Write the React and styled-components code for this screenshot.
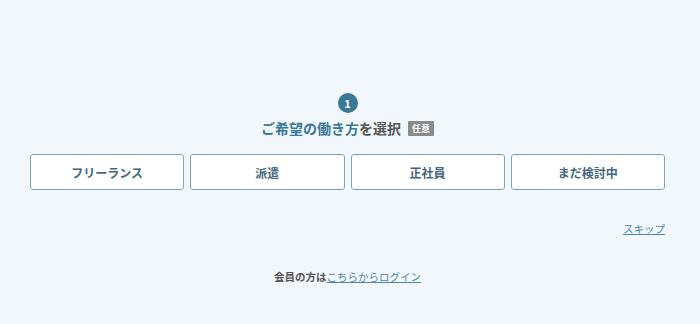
import styled, { createGlobalStyle } from "styled-components";

const GlobalStyle = createGlobalStyle`
    html, body {
        margin: 0;
        padding: 0;
        background: #f2f7fb;
    }
    body {
        font-family: "Noto Sans CJK JP", "Noto Sans", sans-serif;
    }
`;

const options = ["フリーランス", "派遣", "正社員", "まだ検討中"];

const App = () => {
    return (
        <>
            <GlobalStyle />
            <Page>
                <Step>1</Step>
                <Title>
                    <Accent>ご希望の働き方</Accent>を選択
                    <Badge>任意</Badge>
                </Title>
                <Options>
                    {options.map((label) => (
                        <Option key={label} type="button">
                            {label}
                        </Option>
                    ))}
                </Options>
                <SkipRow>
                    <SkipLink href="#">スキップ</SkipLink>
                </SkipRow>
                <Login>
                    会員の方は<LoginLink href="#">こちらからログイン</LoginLink>
                </Login>
            </Page>
        </>
    );
};

const Page = styled.div`
    width: 700px;
    height: 324px;
    box-sizing: border-box;
    padding: 93px 35px 0 30px;
    display: flex;
    flex-direction: column;
    align-items: center;
`;

const Step = styled.div`
    width: 20px;
    height: 20px;
    border-radius: 50%;
    background: #3b7898;
    color: #fff;
    font-size: 11px;
    font-weight: 700;
    display: flex;
    align-items: center;
    justify-content: center;
    line-height: 1;
`;

const Title = styled.h2`
    margin: 5px 0 0;
    font-size: 14px;
    font-weight: 700;
    color: #555;
    display: flex;
    align-items: center;
    line-height: 20px;
`;

const Accent = styled.span`
    color: #3b7898;
`;

const Badge = styled.span`
    margin-left: 7px;
    background: #8a8a8a;
    color: #fff;
    font-size: 9px;
    font-weight: 700;
    padding: 0 4px;
    height: 15px;
    line-height: 15px;
    border-radius: 1px;
`;

const Options = styled.div`
    margin-top: 16px;
    width: 100%;
    display: grid;
    grid-template-columns: repeat(4, 1fr);
    gap: 6px;
`;

const Option = styled.button`
    height: 36px;
    background: #fff;
    border: 1px solid #7ea3ba;
    border-radius: 3px;
    font-family: inherit;
    font-size: 12px;
    font-weight: 700;
    color: #44677f;
    cursor: pointer;
`;

const SkipRow = styled.div`
    width: 100%;
    display: flex;
    justify-content: flex-end;
    margin-top: 31px;
`;

const SkipLink = styled.a`
    font-size: 10.5px;
    color: #4a86ac;
    text-decoration: underline;
    line-height: 16px;
`;

const Login = styled.p`
    margin: 32px 0 0;
    font-size: 10.5px;
    font-weight: 700;
    color: #555;
    line-height: 16px;
`;

const LoginLink = styled.a`
    color: #4a86ac;
    font-weight: 400;
    text-decoration: underline;
`;

export default App;
